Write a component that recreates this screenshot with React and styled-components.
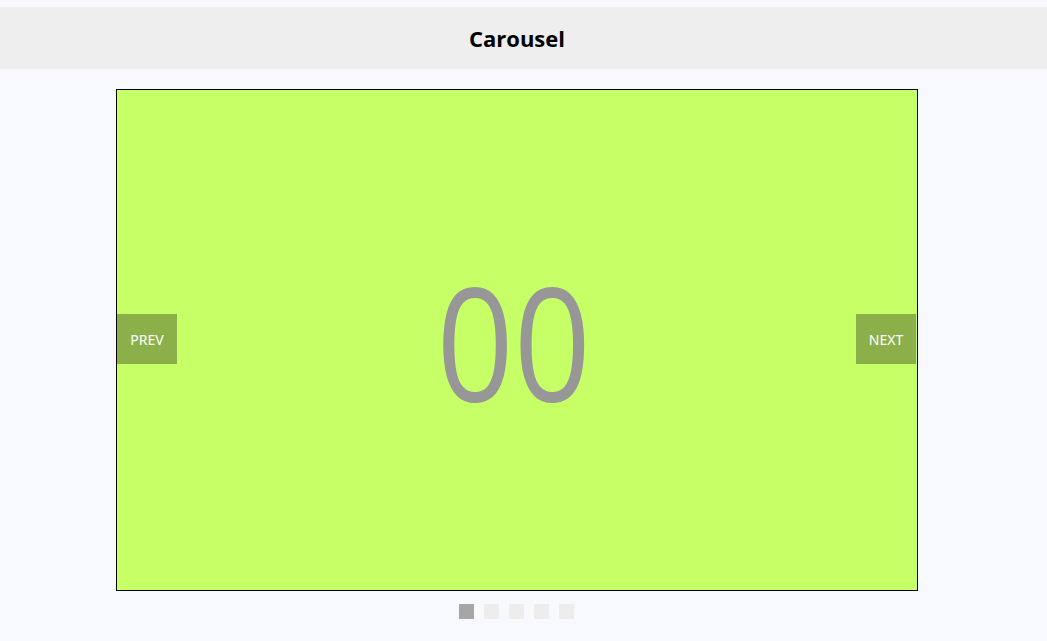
import React, { useState } from "react";
import styled, { createGlobalStyle } from "styled-components";

//global
const GlobalStyle = createGlobalStyle`
    html, body {
        margin: 0;
        padding: 0;
        background: #f8f9fe;
        font-family: "Open Sans", "Noto Sans", sans-serif;
    }
`

//styled
const Wrapper = styled.div`
    width: 100%;
    padding-top: 7px;
`
const Header = styled.header`
    height: 62px;
    background: #edeeed;
    display: flex;
    align-items: center;
    justify-content: center;
    padding-right: 13px;
`
const Title = styled.h1`
    margin: 0;
    font-size: 22px;
    font-weight: bold;
    color: #000;
`
const Main = styled.main`
    display: flex;
    flex-direction: column;
    align-items: center;
    padding: 20px 13px 0 0;
`
const Frame = styled.div`
    position: relative;
    width: 800px;
    height: 500px;
    border: 1px solid #000;
    background: ${props => props.bg};
    display: flex;
    align-items: center;
    justify-content: center;
`
const Number = styled.span`
    font-family: "Open Sans", "Noto Sans", sans-serif;
    font-size: 157px;
    line-height: 1;
    color: #979797;
    margin: 0 7px 0 0;
    transform: scaleX(0.86);
`
const NavButton = styled.button`
    position: absolute;
    top: 224px;
    ${props => props.side}: ${props => (props.side === "right" ? "1px" : "0")};
    width: 60px;
    height: 50px;
    border: none;
    padding: 0;
    background: #8bb04a;
    color: #fff;
    font-family: "Noto Sans", "Open Sans", sans-serif;
    font-size: 14px;
    cursor: pointer;
`
const Dots = styled.div`
    display: flex;
    gap: 10px;
    margin-top: 13px;
    margin-right: 2px;
`
const Dot = styled.span`
    width: 15px;
    height: 15px;
    background: ${props => (props.active ? "#a6a6a6" : "#ededed")};
`

const slides = ["#c6ff66", "#66d9ff", "#ffb366", "#ff7aa8", "#b99cff"];

function App() {
    const [index, setIndex] = useState(0);
    const total = slides.length;

    return (
        <Wrapper>
            <GlobalStyle />
            <Header>
                <Title>Carousel</Title>
            </Header>
            <Main>
                <Frame bg={slides[index]}>
                    <Number>{String(index).padStart(2, "0")}</Number>
                    <NavButton side="left" onClick={() => setIndex((index + total - 1) % total)}>PREV</NavButton>
                    <NavButton side="right" onClick={() => setIndex((index + 1) % total)}>NEXT</NavButton>
                </Frame>
                <Dots>
                    {slides.map((s, i) => (
                        <Dot key={i} active={i === index} />
                    ))}
                </Dots>
            </Main>
        </Wrapper>
    );
}

export default App;
